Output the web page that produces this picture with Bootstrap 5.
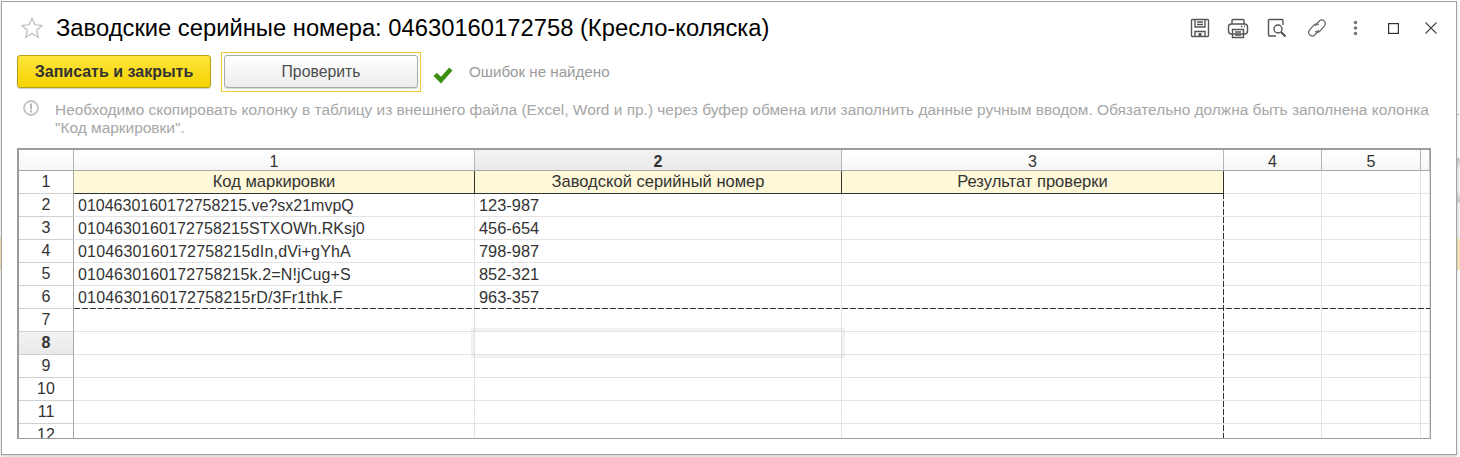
<!DOCTYPE html>
<html lang="ru">
<head>
<meta charset="utf-8">
<title>Заводские серийные номера</title>
<link href="https://cdn.jsdelivr.net/npm/bootstrap@5.3.0/dist/css/bootstrap.min.css" rel="stylesheet">
<script src="https://cdn.jsdelivr.net/npm/bootstrap@5.3.0/dist/js/bootstrap.bundle.min.js"></script>
<style>
html,body{height:457px;overflow:hidden;background:#fff;font-family:"Liberation Sans",Arial,sans-serif}
.bgstrip{position:absolute;top:0;width:1px;height:457px;background:linear-gradient(#fff 237px,#f6e6bd 237px,#f6e6bd 270px,#fff 270px)}
.bgstrip.l{left:0}
.bgstrip.r{left:1457px;width:3px;background:linear-gradient(#fff 114px,#ccc 114px,#ccc 115px,#fff 115px,#fff 158px,#ccc 158px,#ccc 159px,#f2f2f2 170px,#f2f2f2 190px,#ccc 201px,#ccc 202px,#f2f2f2 203px,#f2f2f2 238px,#f6e6bd 239px,#f6e6bd 270px,#fff 270px)}
.win{position:relative;width:1456px;height:454px;margin:1px 0 0 1px;border:1px solid #a3a3a3;box-shadow:0 2px 3px rgba(0,0,0,.18);background:#fff;color:#333}
.head{height:50px;padding:2px 0 0 18px}
.star{width:24px;height:24px;flex:none}
.ttl{font-size:23.78px;line-height:28px;color:#000;margin-left:12px;white-space:nowrap}
.tools{margin-left:auto;padding-right:19px}
.tools svg{display:block}
.tools .sp17{margin-left:17px}
.tools .sp18{margin-left:18px}
.tools .sp20{margin-left:20px}
.tools .sp26{margin-left:26px}
.tools .sp30{margin-left:30px}
.bar{padding-left:15px;height:40px}
.btn-y,.btn-g{display:block;width:194px;height:33px;padding:0;line-height:31px;border-radius:3px;font-family:inherit}
.btn-y{margin-top:3px;font-size:16px;font-weight:700;color:#333;background:linear-gradient(#ffe53d,#f4d300);border:1px solid #b79f1c;box-shadow:0 1px 1px rgba(0,0,0,.2)}
.btn-y:hover{background:linear-gradient(#ffe53d,#f4d300);color:#333;border-color:#b79f1c}
.focus-box{border:1px solid #f5cb2a;padding:2px;margin-left:10px;height:40px}
.btn-g{font-size:15.8px;color:#4d4d4d;background:linear-gradient(#fff,#ececec);border:1px solid #a9a9a9;box-shadow:0 1px 1px rgba(0,0,0,.15)}
.btn-g:hover{background:linear-gradient(#fff,#ececec);color:#4d4d4d;border-color:#a9a9a9}
.ok{font-size:15.15px;color:#9a9a9a;margin-left:12px}
.ok svg{margin:6px 16px 0 0}
.hint{padding:9px 20px 0 20px;font-size:15.45px;line-height:18px;color:#a6a6a6;height:56px}
.hint svg{flex:none;margin-right:15px;margin-top:-2px}
.sheet{position:relative;margin-left:15px;width:1414px;height:291px;border:1px solid #9c9c9c;border-top-width:2px;border-left-width:2px;overflow:hidden;background:#fff}
.grid{table-layout:fixed;border-collapse:separate;border-spacing:0;width:1411px;font-size:16.4px;color:#333;margin:0}
.grid td,.grid th{height:23px;padding:0 0 0 4px;border-right:1px solid #e3e3e3;border-bottom:1px solid #e3e3e3;font-weight:400;line-height:22px;white-space:nowrap;overflow:hidden;background:#fff}
.grid .code{font-size:16px;padding-top:1px;line-height:21px}
.grid .ls3{letter-spacing:.1px}
.grid .ls4{letter-spacing:.19px}
.grid .ls5{letter-spacing:.13px}
.grid .ls6{letter-spacing:.19px}
.grid .top{height:21px;padding:3px 0 0;line-height:17px;font-size:16px;text-align:center;border-right:1px solid #b5b5b5;border-bottom:1px solid #a8a8a8;background:linear-gradient(#fff,#f6f6f6)}
.grid .top.sel{font-weight:700;background:linear-gradient(#f3f3f3,#e9e9e9)}
.grid .left{font-size:16px;text-align:center;padding:0;border-right:1px solid #a8a8a8;border-bottom:1px solid #d0d0d0;background:#fff}
.grid .left.sel{font-weight:700;background:linear-gradient(#f3f3f3,#e9e9e9)}
.grid .cap{font-size:16.55px;background:#fff8d9;text-align:center;padding:0;border-right:1px solid #333;border-bottom:1px solid #333}
.dash-h{position:absolute;left:55px;right:0;top:158px;height:1px;background:repeating-linear-gradient(90deg,#333 0 6px,transparent 6px 8px)}
.dash-v{position:absolute;left:1204px;top:43px;bottom:0;width:1px;background:repeating-linear-gradient(180deg,#333 0 6px,transparent 6px 8px)}
.cursor{position:absolute;left:452px;top:178px;width:374px;height:30px;border:3px solid rgba(0,0,0,.05);pointer-events:none}
</style>
</head>
<body>
<div class="bgstrip l"></div>
<div class="bgstrip r"></div>
<div class="win d-flex flex-column">
  <div class="head d-flex align-items-center">
    <svg class="star" viewBox="0 0 24 24"><path d="M12 2.2l2.9 6.6 7.1.7-5.400 4.700 1.600 7-6.200-3.700-6.200 3.700 1.600-7L2 9.500l7.100-.7z" fill="#fff" stroke="#bdbdbd" stroke-width="1.2"/></svg>
    <div class="ttl">Заводские серийные номера: 04630160172758 (Кресло-коляска)</div>
    <div class="tools d-flex align-items-center">
      <svg width="20" height="20" viewBox="0 0 20 20" fill="none" stroke="#555" stroke-width="1.4"><path d="M2.500 1.500h15a1 1 0 0 1 1 1v15a1 1 0 0 1-1 1h-15a1 1 0 0 1-1-1v-15a1 1 0 0 1 1-1z"/><path d="M5 1.500v7.500h10V1.500M7 4h6M7 6.500h6M5 18.500v-5h10v5"/><rect x="8.500" y="15" width="3" height="3" fill="#555" stroke="none"/></svg>
      <svg class="sp17" width="22" height="22" viewBox="0 0 22 22" fill="none" stroke="#555" stroke-width="1.4"><path d="M5 7V3.500a1 1 0 0 1 1-1h10a1 1 0 0 1 1 1V7"/><rect x="1.500" y="7" width="19" height="10" rx="3"/><path d="M5.500 20.500v-8h11v8zM8 15h6M8 18h6M14 9.500h1.500M17 9.500h1"/></svg>
      <svg class="sp18" width="20" height="20" viewBox="0 0 20 20" fill="none" stroke="#555" stroke-width="1.4"><path d="M9 18H2.500a1 1 0 0 1-1-1V2.500a1 1 0 0 1 1-1H15a1 1 0 0 1 1 1V7"/><circle cx="11" cy="11" r="4"/><path d="M14 14l4.500 4.500" stroke-width="2.200"/></svg>
      <svg class="sp20" width="20" height="20" viewBox="0 0 20 20" fill="none" stroke="#666" stroke-width="1.200"><path d="M8 8l4.300-5a3.600 3.600 0 0 1 5.300 4.800l-4.400 5a3.400 3.400 0 0 1-4.800.2"/><path d="M12 12l-4.300 5a3.600 3.600 0 0 1-5.300-4.800l4.400-5a3.400 3.400 0 0 1 4.800-.2"/></svg>
      <svg class="sp26" width="5" height="16" viewBox="0 0 5 16" fill="#777"><circle cx="2.500" cy="2.500" r="1.800"/><circle cx="2.500" cy="8" r="1.800"/><circle cx="2.500" cy="13.500" r="1.800"/></svg>
      <svg class="sp30" width="11" height="11" viewBox="0 0 11 11" fill="none" stroke="#333" stroke-width="1.200"><rect x=".6" y=".6" width="9.800" height="9.800"/></svg>
      <svg class="sp26" width="12" height="12" viewBox="0 0 12 12" fill="none" stroke="#444" stroke-width="1.100"><path d="M.5.500l11 11M11.500.500l-11 11"/></svg>
    </div>
  </div>
  <div class="bar d-flex">
    <button type="button" class="btn btn-y align-self-start">Записать и закрыть</button>
    <div class="focus-box"><button type="button" class="btn btn-g">Проверить</button></div>
    <div class="ok d-flex align-items-center align-self-center">
      <svg width="20" height="17" viewBox="0 0 20 17"><path d="M.5 9l3.300-3.200 4.200 4L16.200.5 19.500 3.500 8 16.500z" fill="#3d8f14"/></svg>
      <span>Ошибок не найдено</span>
    </div>
  </div>
  <div class="hint d-flex">
    <svg width="18" height="18" viewBox="0 0 18 18"><circle cx="9" cy="9" r="7" fill="#fff" stroke="#c4c4c4" stroke-width="1.800"/><rect x="8" y="4.500" width="2" height="6" fill="#b5b5b5"/><rect x="8" y="11.500" width="2" height="2" fill="#b5b5b5"/></svg>
    <div>Необходимо скопировать колонку в таблицу из внешнего файла (Excel, Word и пр.) через буфер обмена или заполнить данные ручным вводом. Обязательно должна быть заполнена колонка "Код маркировки".</div>
  </div>
  <div class="sheet">
    <table class="grid">
      <colgroup><col style="width:55px"><col style="width:401px"><col style="width:367px"><col style="width:382px"><col style="width:98px"><col style="width:99px"><col></colgroup>
      <tr><th class="top"></th><th class="top">1</th><th class="top sel">2</th><th class="top">3</th><th class="top">4</th><th class="top">5</th><th class="top"></th></tr>
      <tr><td class="left">1</td><td class="cap">Код маркировки</td><td class="cap">Заводской серийный номер</td><td class="cap">Результат проверки</td><td></td><td></td><td></td></tr>
      <tr><td class="left">2</td><td class="code">0104630160172758215.ve?sx21mvpQ</td><td>123-987</td><td></td><td></td><td></td><td></td></tr>
      <tr><td class="left">3</td><td class="code ls3">0104630160172758215STXOWh.RKsj0</td><td>456-654</td><td></td><td></td><td></td><td></td></tr>
      <tr><td class="left">4</td><td class="code ls4">0104630160172758215dIn,dVi+gYhA</td><td>798-987</td><td></td><td></td><td></td><td></td></tr>
      <tr><td class="left">5</td><td class="code ls5">0104630160172758215k.2=N!jCug+S</td><td>852-321</td><td></td><td></td><td></td><td></td></tr>
      <tr><td class="left">6</td><td class="code ls6">0104630160172758215rD/3Fr1thk.F</td><td>963-357</td><td></td><td></td><td></td><td></td></tr>
      <tr><td class="left">7</td><td></td><td></td><td></td><td></td><td></td><td></td></tr>
      <tr><td class="left sel">8</td><td></td><td></td><td></td><td></td><td></td><td></td></tr>
      <tr><td class="left">9</td><td></td><td></td><td></td><td></td><td></td><td></td></tr>
      <tr><td class="left">10</td><td></td><td></td><td></td><td></td><td></td><td></td></tr>
      <tr><td class="left">11</td><td></td><td></td><td></td><td></td><td></td><td></td></tr>
      <tr><td class="left">12</td><td></td><td></td><td></td><td></td><td></td><td></td></tr>
    </table>
    <div class="dash-h"></div>
    <div class="dash-v"></div>
    <div class="cursor"></div>
  </div>
</div>
</body>
</html>
